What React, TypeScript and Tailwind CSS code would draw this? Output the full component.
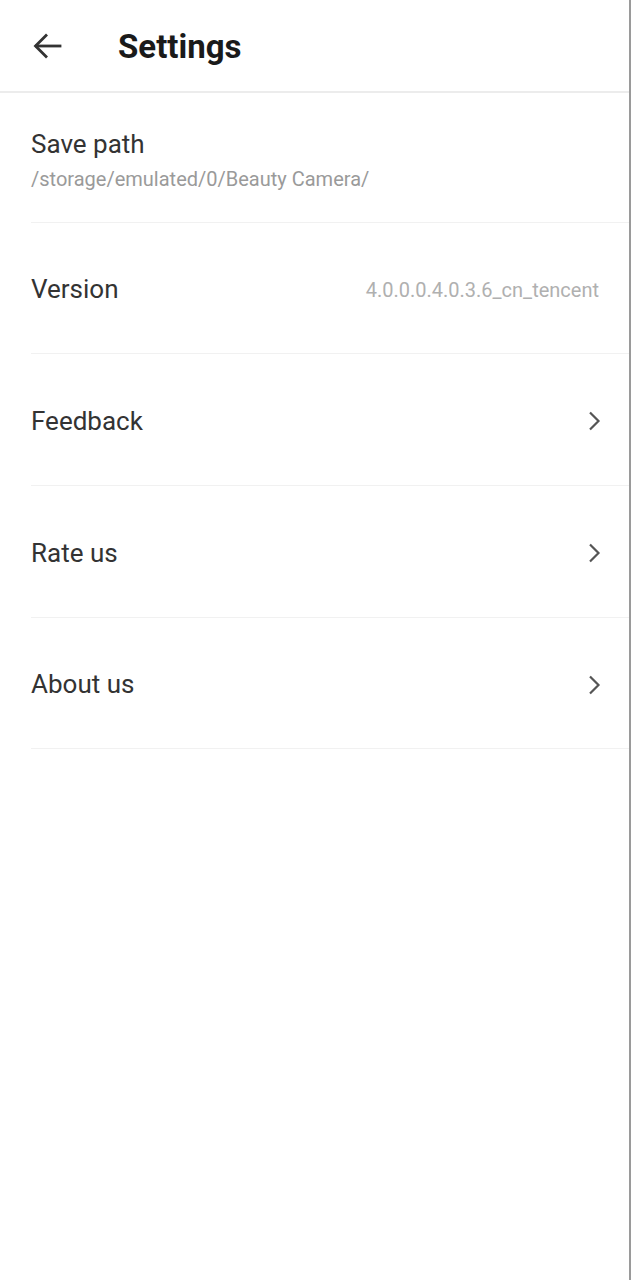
import React from 'react';

const BackArrow = () => (
  <svg width="30" height="30" viewBox="0 0 30 30" fill="none" stroke="#333" strokeWidth="2.8" strokeLinecap="square">
    <path d="M28 15H4.5" />
    <path d="M15 3.5 3.5 15 15 26.5" strokeLinecap="butt" />
  </svg>
);

const Chevron = () => (
  <svg width="14" height="20" viewBox="0 0 14 20" fill="none" stroke="#555" strokeWidth="2.2">
    <path d="M3 1.5 11.5 10 3 18.5" />
  </svg>
);

const rows = [
  { label: 'Feedback', h: 'h-[132px]' },
  { label: 'Rate us', h: 'h-[132px]' },
  { label: 'About us', h: 'h-[131px]' },
];

export default function App() {
  return (
    <div className="min-h-screen w-full bg-white border-r-2 border-[#9a9a9a] font-['Roboto',sans-serif]">
      <div className="h-[93px] flex items-center border-b-2 border-[#ececec]">
        <div className="w-[92px] flex justify-center pl-[1px] pt-[1px]">
          <BackArrow />
        </div>
        <h1 className="ml-[26px] pt-[2px] text-[33px] font-bold text-[#1a1a1a] leading-none">Settings</h1>
      </div>

      <div className="pl-[31px]">
        <div className="h-[130px] flex flex-col justify-center border-b border-[#f1f1f1] pt-[4px]">
          <div className="text-[26px] leading-[30px] text-[#333]">Save path</div>
          <div className="mt-[8px] text-[20px] leading-[24px] text-[#9a9a9a]">/storage/emulated/0/Beauty Camera/</div>
        </div>

        <div className="h-[131px] flex items-center justify-between border-b border-[#f1f1f1] pr-[30px] pt-[3px]">
          <span className="text-[26px] text-[#333]">Version</span>
          <span className="text-[20px] text-[#b0b0b0]">4.0.0.0.4.0.3.6_cn_tencent</span>
        </div>

        {rows.map((r) => (
          <div key={r.label} className={`${r.h} flex items-center justify-between border-b border-[#f1f1f1] pr-[28px] pt-[3px]`}>
            <span className="text-[26px] text-[#333]">{r.label}</span>
            <Chevron />
          </div>
        ))}
      </div>
    </div>
  );
}
